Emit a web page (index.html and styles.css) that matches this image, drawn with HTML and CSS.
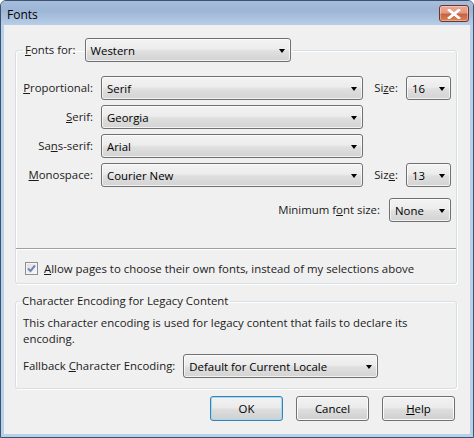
FILE: index.html
```html
<!DOCTYPE html>
<html>
<head>
<meta charset="utf-8">
<link rel="stylesheet" href="styles.css">
</head>
<body>
<div class="window">
  <div class="titlebar">
    <span class="title">Fonts</span>
    <div class="close">
      <svg width="14" height="10" viewBox="0 0 14 10"><path d="M2 1 L12 9 M12 1 L2 9" stroke="#fff" stroke-width="2.6" stroke-linecap="square"/><path d="M2 1 L12 9 M12 1 L2 9" stroke="#fff" stroke-width="2" /></svg>
    </div>
  </div>
  <div class="client">
    <fieldset class="group fonts">
      <legend class="legend-row">
        <span class="lbl"><u>F</u>onts for:</span>
        <div class="combo w-western"><span>Western</span><i class="arrow"></i></div>
      </legend>
      <div class="font-grid">
        <span class="lbl right"><u>P</u>roportional:</span>
        <div class="combo"><span>Serif</span><i class="arrow"></i></div>
        <span class="lbl size">Si<u>z</u>e:</span>
        <div class="combo"><span>16</span><i class="arrow"></i></div>

        <span class="lbl right"><u>S</u>erif:</span>
        <div class="combo"><span>Georgia</span><i class="arrow"></i></div>
        <span></span><span></span>

        <span class="lbl right">Sa<u>n</u>s-serif:</span>
        <div class="combo"><span>Arial</span><i class="arrow"></i></div>
        <span></span><span></span>

        <span class="lbl right"><u>M</u>onospace:</span>
        <div class="combo"><span>Courier New</span><i class="arrow"></i></div>
        <span class="lbl size">Siz<u>e</u>:</span>
        <div class="combo"><span>13</span><i class="arrow"></i></div>
      </div>
      <div class="min-row">
        <span class="lbl">Minimum f<u>o</u>nt size:</span>
        <div class="combo w-none"><span>None</span><i class="arrow"></i></div>
      </div>
      <div class="sep"></div>
      <label class="check-row">
        <span class="checkbox">
          <svg width="9" height="9" viewBox="0 0 9 9"><path d="M1 4.5 L3.5 7 L8 1.5" fill="none" stroke="#6f86b5" stroke-width="2"/></svg>
        </span>
        <span><u>A</u>llow pages to choose their own fonts, instead of my selections above</span>
      </label>
    </fieldset>

    <fieldset class="group enc">
      <legend class="enc-legend">Character Encoding for Legacy Content</legend>
      <p class="desc">This character encoding is used for legacy content that fails to declare its encoding.</p>
      <div class="fallback-row">
        <span class="lbl">Fallback <u>C</u>haracter Encoding:</span>
        <div class="combo w-locale"><span>Default for Current Locale</span><i class="arrow"></i></div>
      </div>
    </fieldset>

    <div class="buttons">
      <div class="btn default">OK</div>
      <div class="btn">Cancel</div>
      <div class="btn"><u>H</u>elp</div>
    </div>
  </div>
</div>
</body>
</html>
```

FILE: styles.css
```css
* { box-sizing: border-box; }
html, body { margin: 0; padding: 0; }
body {
  width: 474px;
  height: 438px;
  overflow: hidden;
  background: #fff;
  font-family: "Open Sans", "Noto Sans", sans-serif;
  font-size: 11.4px;
  color: #1b1b1b;
}
u { text-underline-offset: 1px; }

.window {
  width: 474px;
  height: 438px;
  border: 1px solid #3c536f;
  border-radius: 6px 6px 0 0;
  background: #b9d0e9;
  display: flex;
  flex-direction: column;
}
.titlebar {
  height: 24px;
  flex: none;
  display: flex;
  align-items: flex-start;
  justify-content: space-between;
  padding: 4px 4px 0 6px;
  border-radius: 5px 5px 0 0;
  background: linear-gradient(#a6bddb, #9db6d5 40%, #b7cde7);
}
.title {
  font-size: 12px;
  color: #000;
  line-height: 17px;
  margin-top: 1px;
}
.close {
  width: 30px;
  height: 17px;
  border: 1px solid #6e3426;
  border-radius: 3px;
  background: linear-gradient(#eba893, #e39a84 45%, #c8623e 55%, #d9835a);
  box-shadow: inset 0 0 0 1px rgba(255,255,255,.35);
  display: flex;
  align-items: center;
  justify-content: center;
}

.client {
  flex: 1;
  margin: 0 3px 3px 3px;
  background: #f0f0f0;
  padding: 13px 13px 0 11px;
  display: flex;
  flex-direction: column;
}

.group {
  margin: 0;
  border: 1px solid #d5dfe5;
  border-radius: 3px;
  box-shadow: inset 1px 1px 0 #fff, 1px 1px 0 #fff;
  min-width: 0;
}
.fonts { padding: 14px 5px 7px 7px; }
.legend-row {
  display: flex;
  align-items: center;
  gap: 9px;
  padding: 0 2px;
  height: 24px;
}
.lbl { white-space: nowrap; line-height: 16px; }
.right { justify-self: end; }

.combo {
  height: 24px;
  display: flex;
  align-items: center;
  justify-content: space-between;
  border: 1px solid #707070;
  border-radius: 3px;
  padding: 0 5px 0 5px;
  background: linear-gradient(#f3f3f3, #ececec 45%, #dfdfdf 55%, #d3d3d3);
  box-shadow: inset 0 0 0 1px rgba(255,255,255,.7);
  white-space: nowrap;
  color: #000;
}
.arrow {
  width: 0;
  height: 0;
  border-left: 3.5px solid transparent;
  border-right: 3.5px solid transparent;
  border-top: 4px solid #000;
  margin-top: 1px;
}
.w-western { width: 206px; }
.w-none { width: 62px; }
.w-locale { width: 195px; height: 24px; }

.font-grid {
  display: grid;
  grid-template-columns: 70px 262px 27px 45px;
  grid-auto-rows: 24px;
  column-gap: 8px;
  row-gap: 5px;
  align-items: center;
}
.size { justify-self: end; }

.min-row {
  margin-top: 11px;
  display: flex;
  justify-content: flex-end;
  align-items: center;
  gap: 9px;
}

.sep {
  margin: 26px -5px 0 -7px;
  border-top: 1px solid #a0a0a0;
  border-bottom: 1px solid #fff;
}

.check-row {
  margin-top: 10px;
  height: 16px;
  display: flex;
  align-items: center;
  gap: 6px;
  padding-left: 2px;
  white-space: nowrap;
}
.checkbox {
  width: 13px;
  height: 13px;
  border: 1px solid #8e8f8f;
  background: linear-gradient(135deg, #dcdcdc, #fbfbfb);
  box-shadow: inset 0 0 0 1px #f4f4f4;
  display: flex;
  align-items: center;
  justify-content: center;
}

.enc {
  margin-top: 9px;
  padding: 6px 5px 10px 7px;
}
.enc-legend {
  padding: 0 2px;
  margin-left: -3px;
  line-height: 16px;
}
.desc {
  margin: 0;
  line-height: 16px;
  width: 405px;
}
.fallback-row {
  margin-top: 7px;
  display: flex;
  align-items: center;
  gap: 8px;
}

.buttons {
  margin-top: 7px;
  display: flex;
  justify-content: flex-end;
  gap: 13px;
  padding-right: 2px;
}
.btn {
  width: 73px;
  height: 25px;
  border: 1px solid #707070;
  border-radius: 3px;
  background: linear-gradient(#f2f2f2, #ebebeb 45%, #dddddd 55%, #cfcfcf);
  box-shadow: inset 0 0 0 1px #fbfbfb;
  display: flex;
  align-items: center;
  justify-content: center;
  color: #000;
}
.btn.default {
  border-color: #3c7fb1;
  box-shadow: inset 0 0 0 1px #9fdcf7;
}
```
